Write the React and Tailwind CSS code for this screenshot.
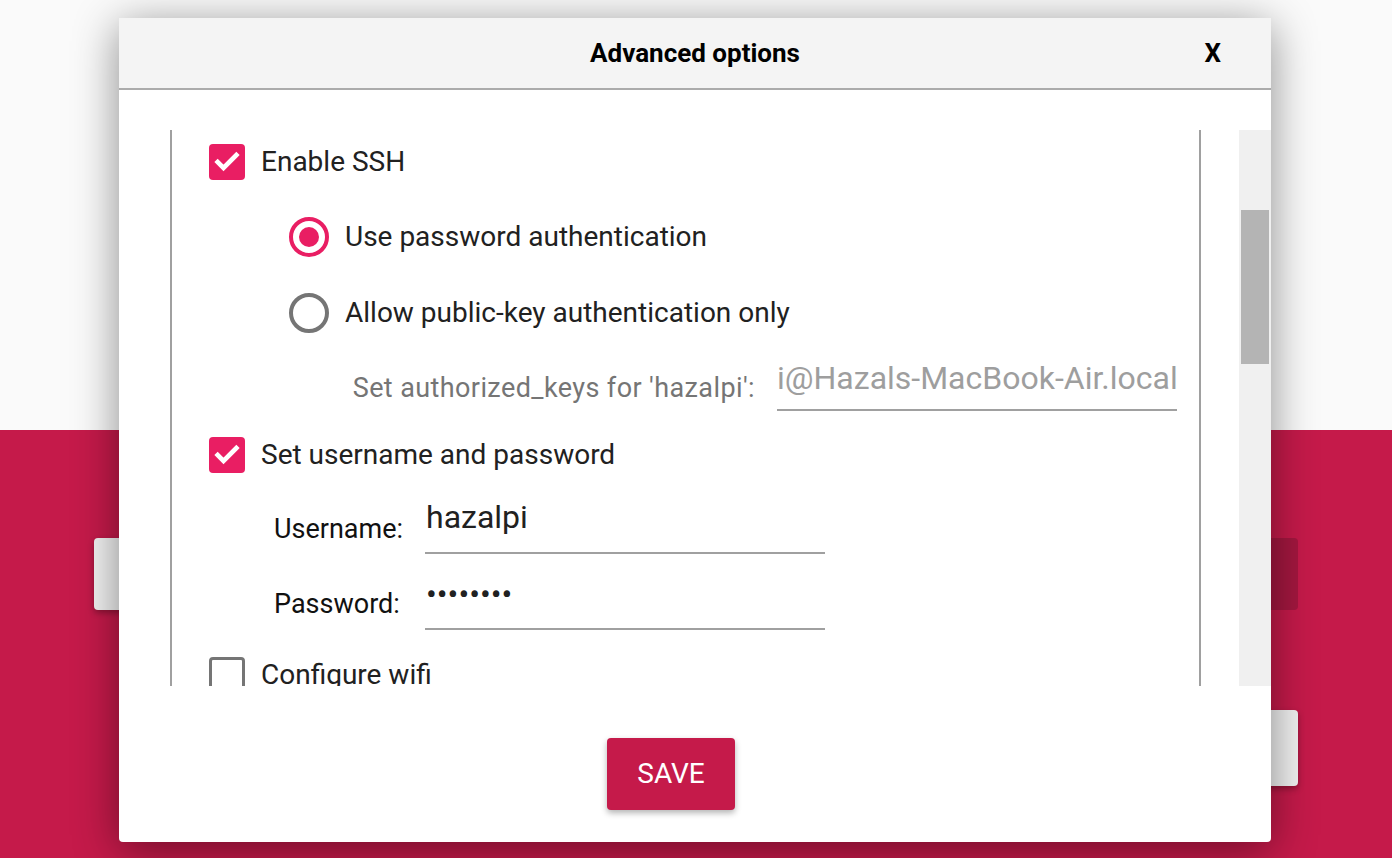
import { Check } from 'lucide-react';

const font = { fontFamily: 'Roboto, "Noto Sans", sans-serif' };

function Checkbox({ checked }) {
  if (checked) {
    return (
      <div className="w-[36px] h-[36px] rounded-[4px] bg-[#e91e63] flex items-center justify-center shrink-0">
        <Check size={28} strokeWidth={4} color="#ffffff" strokeLinecap="square" strokeLinejoin="miter" />
      </div>
    );
  }
  return <div className="w-[36px] h-[36px] rounded-[4px] border-[3px] border-[#757575] shrink-0" />;
}

function Radio({ checked }) {
  return (
    <div
      className={
        'w-[40px] h-[40px] rounded-full border-[4px] flex items-center justify-center shrink-0 ' +
        (checked ? 'border-[#e91e63]' : 'border-[#757575]')
      }
    >
      {checked && <div className="w-[20px] h-[20px] rounded-full bg-[#e91e63]" />}
    </div>
  );
}

export default function App() {
  return (
    <div className="relative w-[1392px] h-[858px] overflow-hidden" style={font}>
      {/* page behind the dialog */}
      <div className="h-[430px] bg-[#fafafa]" />
      <div className="h-[428px] bg-[#c51a4a] pt-[108px] px-[94px]">
        <div className="flex justify-between">
          <div className="w-[300px] h-[72px] rounded-[4px] bg-[#f2f2f2] shadow-[0_3px_6px_rgba(0,0,0,0.3)]" />
          <div className="w-[300px] h-[72px] rounded-[4px] bg-[#a3173f]" />
        </div>
        <div className="flex justify-end mt-[100px]">
          <div className="w-[300px] h-[76px] rounded-[4px] bg-[#f2f2f2] shadow-[0_3px_6px_rgba(0,0,0,0.3)]" />
        </div>
      </div>

      {/* dialog */}
      <div className="absolute left-[119px] top-[18px] w-[1152px] h-[824px] bg-white rounded-b-[4px] shadow-[0_8px_45px_rgba(0,0,0,0.45)] flex flex-col">
        <div className="h-[72px] bg-[#f4f4f4] border-b-2 border-[#ababab] grid grid-cols-[1fr_auto_1fr] items-center">
          <div />
          <h2 className="text-[26px] font-bold text-black">Advanced options</h2>
          <div className="flex justify-end pr-[50px]">
            <span className="text-[26px] font-bold text-black">X</span>
          </div>
        </div>

        <div className="pt-[40px] pl-[51px] flex h-[596px]">
          <div className="w-[1031px] h-[556px] border-x-2 border-[#a0a0a0] overflow-hidden pl-[37px] pt-[14px] text-[#212121]">
            <div className="flex items-center gap-[16px] h-[36px]">
              <Checkbox checked />
              <span className="text-[28px]">Enable SSH</span>
            </div>

            <div className="ml-[80px] mt-[37px] flex items-center gap-[16px] h-[40px]">
              <Radio checked />
              <span className="text-[28px]">Use password authentication</span>
            </div>
            <div className="ml-[80px] mt-[36px] flex items-center gap-[16px] h-[40px]">
              <Radio />
              <span className="text-[28px]">Allow public-key authentication only</span>
            </div>

            <div className="mt-[26px] flex items-center h-[52px]">
              <div className="w-[546px] text-right text-[27px] tracking-[0.4px] text-[#757575] pt-[6px] whitespace-nowrap">Set authorized_keys for 'hazalpi':</div>
              <div className="ml-[22px] w-[400px] h-[52px] border-b-2 border-[#a0a0a0] flex items-center text-[32px] text-[#9e9e9e] overflow-hidden whitespace-nowrap pb-[12px]">
                i@Hazals-MacBook-Air.local
              </div>
            </div>

            <div className="mt-[26px] flex items-center gap-[16px] h-[36px]">
              <Checkbox checked />
              <span className="text-[28px]">Set username and password</span>
            </div>

            <div className="mt-[21px] flex items-center h-[60px]">
              <div className="w-[216px] pl-[65px] text-[27px] text-[#111] pt-[10px]">Username:</div>
              <div className="w-[400px] h-[60px] border-b-2 border-[#a0a0a0] flex items-center text-[32px] text-[#212121] pb-[12px] pl-[1px]">
                hazalpi
              </div>
            </div>
            <div className="mt-[16px] flex items-center h-[60px]">
              <div className="w-[216px] pl-[65px] text-[27px] text-[#111] pt-[8px]">Password:</div>
              <div className="w-[400px] h-[60px] border-b-2 border-[#a0a0a0] flex items-center text-[32px] text-[#212121] pb-[10px] pl-[1px]">
                ••••••••
              </div>
            </div>

            <div className="mt-[27px] flex items-center gap-[16px] h-[36px]">
              <Checkbox />
              <span className="text-[28px]">Configure wifi</span>
            </div>
          </div>

          <div className="ml-[38px] w-[32px] h-[556px] bg-[#f0f0f0] pt-[80px] px-[2px]">
            <div className="h-[154px] bg-[#b4b4b4]" />
          </div>
        </div>

        <div className="flex justify-center pr-[48px] pt-[52px]">
          <button className="w-[128px] h-[72px] rounded-[4px] bg-[#c51a4a] text-white text-[28px] shadow-[0_3px_6px_rgba(0,0,0,0.3)]">
            SAVE
          </button>
        </div>
      </div>
    </div>
  );
}
